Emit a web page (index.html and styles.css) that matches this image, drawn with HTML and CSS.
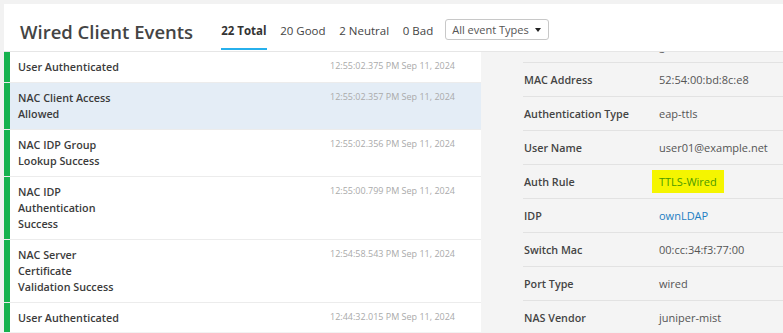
FILE: index.html
```html
<!DOCTYPE html>
<html>
<head>
<meta charset="utf-8">
<link rel="stylesheet" href="styles.css">
</head>
<body>
<div class="card">
  <header class="header">
    <h1 class="title">Wired Client Events</h1>
    <nav class="tabs">
      <span class="tab active">22 Total</span>
      <span class="tab">20 Good</span>
      <span class="tab">2 Neutral</span>
      <span class="tab">0 Bad</span>
    </nav>
    <div class="select">
      <span class="select-text">All event Types</span>
      <span class="caret"></span>
    </div>
  </header>
  <main class="body">
    <section class="events">
      <div class="event">
        <div class="bar"></div>
        <div class="event-name">User Authenticated</div>
        <div class="event-time">12:55:02.375 PM Sep 11, 2024</div>
      </div>
      <div class="event selected">
        <div class="bar"></div>
        <div class="event-name">NAC Client Access Allowed</div>
        <div class="event-time">12:55:02.357 PM Sep 11, 2024</div>
      </div>
      <div class="event">
        <div class="bar"></div>
        <div class="event-name">NAC IDP Group Lookup Success</div>
        <div class="event-time">12:55:02.356 PM Sep 11, 2024</div>
      </div>
      <div class="event">
        <div class="bar"></div>
        <div class="event-name">NAC IDP Authentication Success</div>
        <div class="event-time">12:55:00.799 PM Sep 11, 2024</div>
      </div>
      <div class="event">
        <div class="bar"></div>
        <div class="event-name">NAC Server Certificate Validation Success</div>
        <div class="event-time">12:54:58.543 PM Sep 11, 2024</div>
      </div>
      <div class="event">
        <div class="bar"></div>
        <div class="event-name">User Authenticated</div>
        <div class="event-time">12:44:32.015 PM Sep 11, 2024</div>
      </div>
    </section>
    <section class="details">
      <div class="details-inner">
        <div class="drow"><span class="dlabel">Client Vendor</span><span class="dvalue">generic</span></div>
        <div class="drow"><span class="dlabel">MAC Address</span><span class="dvalue">52:54:00:bd:8c:e8</span></div>
        <div class="drow"><span class="dlabel">Authentication Type</span><span class="dvalue">eap-ttls</span></div>
        <div class="drow"><span class="dlabel">User Name</span><span class="dvalue">user01@example.net</span></div>
        <div class="drow"><span class="dlabel">Auth Rule</span><span class="dvalue"><span class="highlight">TTLS-Wired</span></span></div>
        <div class="drow"><span class="dlabel">IDP</span><span class="dvalue link">ownLDAP</span></div>
        <div class="drow"><span class="dlabel">Switch Mac</span><span class="dvalue">00:cc:34:f3:77:00</span></div>
        <div class="drow"><span class="dlabel">Port Type</span><span class="dvalue">wired</span></div>
        <div class="drow"><span class="dlabel">NAS Vendor</span><span class="dvalue">juniper-mist</span></div>
      </div>
    </section>
  </main>
</div>
</body>
</html>
```
FILE: styles.css
```css
* { box-sizing: border-box; }
html, body { margin: 0; height: 100%; }
body {
  background: #f2f2f2;
  padding: 4px 0 1px 4px;
  font-family: "Open Sans", "Noto Sans", sans-serif;
  overflow: hidden;
}
.card {
  background: #fff;
  height: 100%;
  display: flex;
  flex-direction: column;
}
.header {
  height: 48px;
  flex: none;
  display: flex;
  align-items: center;
  padding: 0 0 1px 16px;
  border-bottom: 1px solid #e6e6e6;
}
.title {
  margin: 10px 0 0 0;
  font-size: 18.5px;
  font-weight: 600;
  color: #444;
  line-height: 24px;
  white-space: nowrap;
}
.tabs {
  align-self: stretch;
  display: flex;
  gap: 13.7px;
  margin-left: 28px;
}
.tab {
  display: flex;
  align-items: center;
  padding-top: 9px;
  font-size: 11.5px;
  color: #444;
  white-space: nowrap;
  border-bottom: 2px solid transparent;
}
.tab.active {
  font-weight: 700;
  color: #333;
  border-bottom-color: #27b0ec;
}
.select {
  margin: 5px 0 0 12px;
  width: 104px;
  height: 21px;
  border: 1px solid #c8c8c8;
  border-radius: 3px;
  display: flex;
  align-items: center;
  justify-content: space-between;
  padding: 0 7px 0 6px;
}
.select-text {
  font-size: 11px;
  color: #555;
  white-space: nowrap;
}
.caret {
  width: 0;
  height: 0;
  border-left: 3.5px solid transparent;
  border-right: 3.5px solid transparent;
  border-top: 4px solid #222;
}
.body {
  flex: 1;
  display: flex;
  min-height: 0;
}
.events {
  width: 477px;
  flex: none;
  overflow: hidden;
}
.event {
  display: flex;
  align-items: stretch;
  border-bottom: 1px solid #ececec;
}
.event.selected { background: #e4edf6; }
.bar {
  width: 6px;
  flex: none;
  background: #16b24e;
}
.event-name {
  width: 112px;
  padding: 7px 0 7px 8px;
  font-size: 10.75px;
  line-height: 16px;
  color: #3b3b3b;
  font-weight: 600;
}
.event-time {
  margin-left: auto;
  padding: 7px 26px 0 0;
  font-size: 9px;
  line-height: 13px;
  color: #aaa;
  white-space: nowrap;
}
.details {
  flex: 1;
  background: #f4f4f4;
  overflow: hidden;
  padding-left: 42px;
}
.details-inner {
  margin-top: -23px;
}
.drow {
  height: 34px;
  display: flex;
  align-items: center;
  border-bottom: 1px solid #e2e2e2;
  font-size: 11px;
  white-space: nowrap;
}
.dlabel {
  width: 136px;
  flex: none;
  padding-left: 1px;
  font-size: 10.75px;
  color: #444;
  font-weight: 600;
}
.dvalue {
  color: #555;
}
.dvalue.link { color: #1d7ec3; }
.highlight {
  display: inline-block;
  background: #f5f500;
  color: #4a9a00;
  padding: 3px 7px;
  margin-left: -7px;
  line-height: 17px;
}
```
